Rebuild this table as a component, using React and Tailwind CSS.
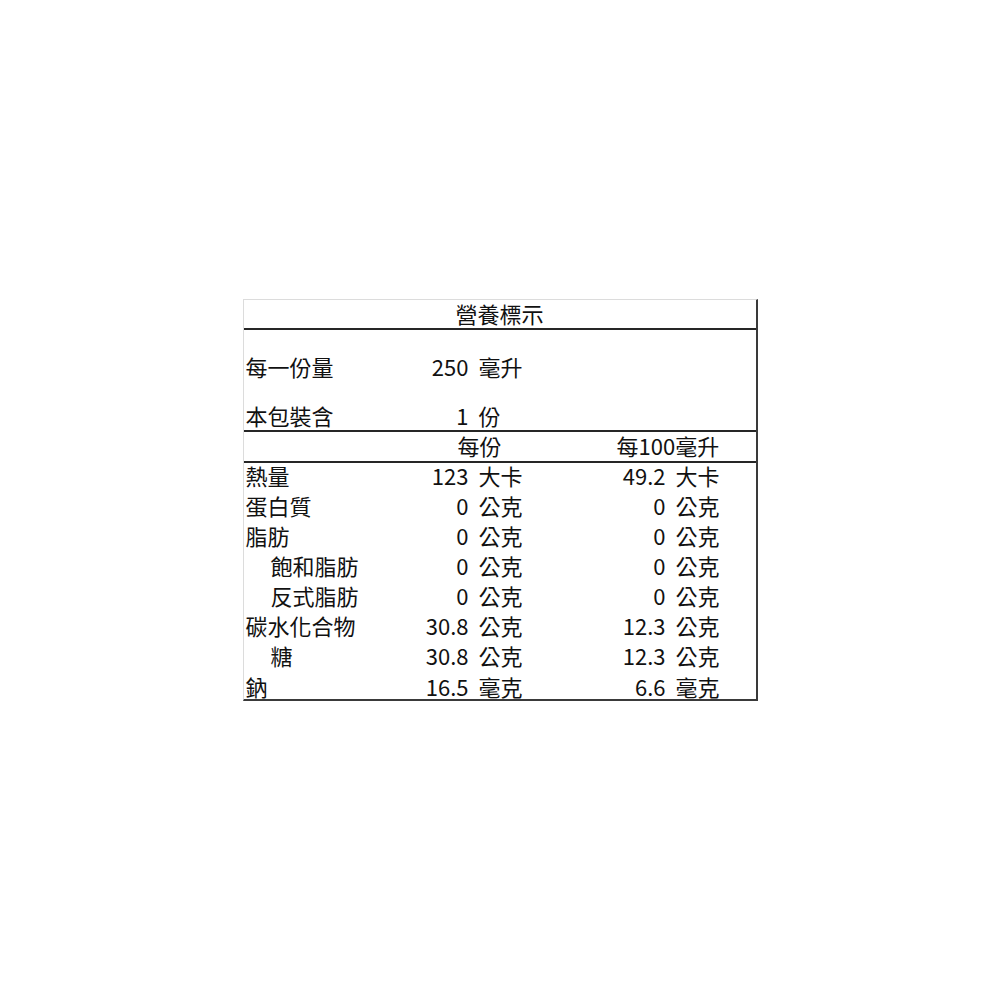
import React from "react";

const rows = [
  { label: "熱量", a: "123", au: "大卡", b: "49.2", bu: "大卡" },
  { label: "蛋白質", a: "0", au: "公克", b: "0", bu: "公克" },
  { label: "脂肪", a: "0", au: "公克", b: "0", bu: "公克" },
  { label: "飽和脂肪", a: "0", au: "公克", b: "0", bu: "公克", indent: true },
  { label: "反式脂肪", a: "0", au: "公克", b: "0", bu: "公克", indent: true },
  { label: "碳水化合物", a: "30.8", au: "公克", b: "12.3", bu: "公克" },
  { label: "糖", a: "30.8", au: "公克", b: "12.3", bu: "公克", indent: true },
  { label: "鈉", a: "16.5", au: "毫克", b: "6.6", bu: "毫克", last: true },
];

const grid = "grid grid-cols-[172px_53px_92px_105px_1fr] items-center";

const Divider = () => <div className="h-[2px] bg-[#262626]" />;

export default function App() {
  return (
    <div
      className="flex min-h-screen w-full items-center justify-center bg-white text-[22px] text-[#111]"
      style={{ fontFamily: '"Noto Sans CJK TC", "Noto Sans CJK SC", sans-serif' }}
    >
      <div className="w-[515px] border-t border-l border-t-[#dcdcdc] border-l-[#dcdcdc] border-r-2 border-b-2 border-r-[#3a3a3a] border-b-[#3a3a3a]">
        {/* 標題 */}
        <div className="flex h-[28px] items-center justify-center pb-[2px] leading-none">營養標示</div>
        <Divider />

        {/* 份量 */}
        <div className="h-[100px] pt-[24px]">
          <div className={`${grid} h-[30px] pb-[6px] leading-none`}>
            <div className="pl-[2px]">每一份量</div>
            <div className="text-right">250</div>
            <div className="pl-[10px]">毫升</div>
          </div>
          <div className={`${grid} mt-[18px] h-[28px] pb-[2px] leading-none`}>
            <div className="pl-[2px]">本包裝含</div>
            <div className="text-right">1</div>
            <div className="pl-[10px]">份</div>
          </div>
        </div>
        <Divider />

        {/* 表頭 */}
        <div className={`${grid} h-[29px] pb-[4px] leading-none`}>
          <div />
          <div className="col-span-2 pl-[42px]">每份</div>
          <div className="col-span-2 pl-[56px]">每100毫升</div>
        </div>
        <Divider />

        {/* 營養素 */}
        {rows.map((r) => (
          <div
            key={r.label}
            className={`${grid} leading-none ${r.last ? "h-[26px]" : "h-[30px] pb-[6px]"}`}
          >
            <div className={r.indent ? "pl-[27px]" : "pl-[2px]"}>{r.label}</div>
            <div className="text-right">{r.a}</div>
            <div className="pl-[10px]">{r.au}</div>
            <div className="text-right">{r.b}</div>
            <div className="pl-[10px]">{r.bu}</div>
          </div>
        ))}
      </div>
    </div>
  );
}
